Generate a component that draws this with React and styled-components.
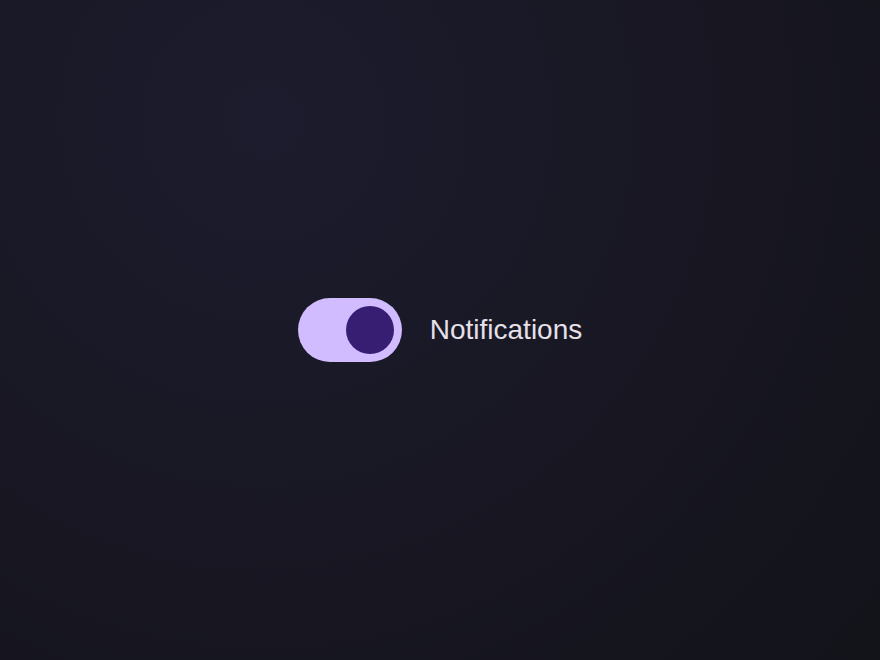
import styled, { createGlobalStyle } from "styled-components";
import { useState } from "react";

const GlobalStyle = createGlobalStyle`
  html, body, #root {
    margin: 0;
    height: 100%;
  }
  body {
    font-family: "Liberation Sans", Arial, sans-serif;
  }
`;

const Page = styled.div`
  min-height: 100vh;
  display: flex;
  align-items: center;
  justify-content: center;
  background: radial-gradient(
    circle at 30% 18%,
    #1d1c2e 0%,
    #191825 40%,
    #13131a 100%
  );
`;

const Row = styled.label`
  display: flex;
  align-items: center;
  gap: 28px;
  cursor: pointer;
`;

const Track = styled.button`
  box-sizing: border-box;
  width: 104px;
  height: 64px;
  padding: 8px;
  border: none;
  border-radius: 32px;
  background: ${(p) => (p.$on ? "#d0bcff" : "#36343b")};
  display: flex;
  justify-content: ${(p) => (p.$on ? "flex-end" : "flex-start")};
  align-items: center;
  cursor: pointer;
`;

const Thumb = styled.span`
  width: 48px;
  height: 48px;
  border-radius: 50%;
  background: ${(p) => (p.$on ? "#381e72" : "#938f99")};
`;

const Label = styled.span`
  font-size: 28px;
  line-height: 1;
  color: #e6e0e9;
`;

export default function App() {
  const [on, setOn] = useState(true);
  return (
    <>
      <GlobalStyle />
      <Page>
        <Row>
          <Track $on={on} onClick={() => setOn(!on)} role="switch" aria-checked={on}>
            <Thumb $on={on} />
          </Track>
          <Label>Notifications</Label>
        </Row>
      </Page>
    </>
  );
}
